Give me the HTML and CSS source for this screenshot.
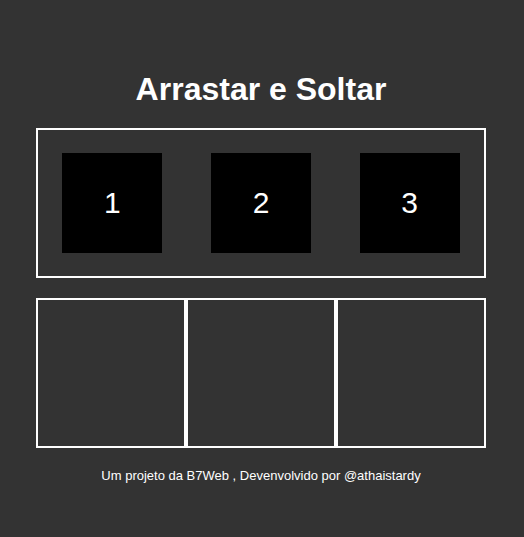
FILE: index.html
```html
<!DOCTYPE html>
<html lang="pt-BR">
<head>
<meta charset="utf-8">
<meta name="viewport" content="width=device-width, initial-scale=1">
<title>Arrastar e Soltar</title>
<link rel="stylesheet" href="styles.css">
</head>
<body>
<main class="board">
  <h1 class="title">Arrastar e Soltar</h1>
  <section class="neutral">
    <div class="item" draggable="true">1</div>
    <div class="item" draggable="true">2</div>
    <div class="item" draggable="true">3</div>
  </section>
  <section class="areas">
    <div class="area"></div>
    <div class="area"></div>
    <div class="area"></div>
  </section>
  <footer class="credits">Um projeto da B7Web , Devenvolvido por @athaistardy</footer>
</main>
</body>
</html>
```
FILE: styles.css
```css
* {
  box-sizing: border-box;
}

body {
  margin: 0;
  min-height: 100vh;
  padding: 0 38px 0 36px;
  display: flex;
  align-items: center;
  justify-content: center;
  background: #333;
  color: #fff;
  font-family: Arial, "Liberation Sans", sans-serif;
}

.board {
  width: 100%;
  max-width: 450px;
  padding-top: 16px;
  text-align: center;
}

.title {
  margin: 0 0 20px;
  font-size: 32px;
  line-height: 38px;
}

.neutral {
  display: flex;
  justify-content: space-around;
  align-items: center;
  height: 150px;
  margin-bottom: 20px;
  border: 2px solid #fff;
}

.item {
  display: flex;
  align-items: center;
  justify-content: center;
  width: 100px;
  height: 100px;
  background: #000;
  font-size: 30px;
}

.areas {
  display: flex;
}

.area {
  flex: 1;
  height: 150px;
  border: 2px solid #fff;
}

.credits {
  margin-top: 20px;
  font-size: 13px;
  line-height: 16px;
}
```
